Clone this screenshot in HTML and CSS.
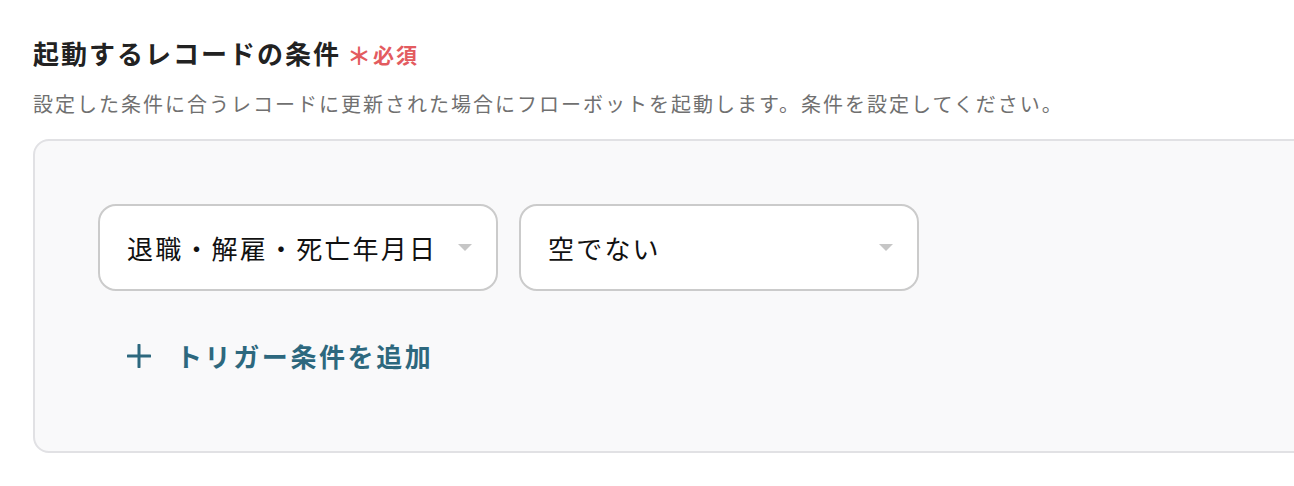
FILE: index.html
```html
<!DOCTYPE html>
<html lang="ja">
<head>
<meta charset="utf-8">
<link rel="stylesheet" href="styles.css">
</head>
<body>
<div class="page">
  <div class="title-row">
    <h2 class="title">起動するレコードの条件</h2>
    <span class="req"><span class="ast">＊</span>必須</span>
  </div>
  <p class="desc">設定した条件に合うレコードに更新された場合にフローボットを起動します。条件を設定してください。</p>
  <div class="panel">
    <div class="selects">
      <div class="select"><span class="val">退職・解雇・死亡年月日</span><span class="caret"></span></div>
      <div class="select"><span class="val">空でない</span><span class="caret"></span></div>
    </div>
    <div class="add">
      <svg class="plus" width="24" height="24" viewBox="0 0 24 24"><path d="M12 1v22M1 12h22" stroke="currentColor" stroke-width="3" stroke-linecap="round" fill="none"/></svg>
      <span class="add-text">トリガー条件を追加</span>
    </div>
  </div>
</div>
</body>
</html>
```
FILE: styles.css
```css
html, body {
  margin: 0;
  padding: 0;
  background: #ffffff;
  overflow: hidden;
}
body {
  font-family: "Noto Sans CJK JP", "Noto Sans", sans-serif;
}
.page {
  padding: 35px 0 0 33px;
}
.title-row {
  display: flex;
  align-items: center;
  height: 36px;
}
.title {
  margin: 0;
  font-size: 26px;
  line-height: 36px;
  font-weight: 700;
  color: #222222;
  letter-spacing: 2px;
}
.req {
  margin-left: 6px;
  color: #e35b5f;
  font-weight: 700;
  font-size: 21px;
  letter-spacing: 2px;
  display: flex;
  align-items: center;
  padding-top: 2px;
}
.ast {
  font-size: 24px;
  margin-right: 2px;
  letter-spacing: 0;
}
.desc {
  margin: 19px 0 0;
  font-size: 20px;
  line-height: 28px;
  color: #707070;
  letter-spacing: 0.1em;
}
.panel {
  margin-top: 21px;
  margin-right: -60px;
  background: #f9f9fa;
  border: 2px solid #e1e1e4;
  border-radius: 16px;
  padding: 63px 63px 77px;
}
.selects {
  display: flex;
  gap: 21px;
}
.select {
  width: 400px;
  height: 87px;
  box-sizing: border-box;
  background: #ffffff;
  border: 2px solid #cbcbcb;
  border-radius: 18px;
  display: flex;
  align-items: center;
  justify-content: space-between;
  padding: 0 24px 0 27px;
}
.val {
  font-size: 26px;
  letter-spacing: 2.2px;
  color: #111111;
  white-space: nowrap;
}
.caret {
  width: 0;
  height: 0;
  border-left: 7px solid transparent;
  border-right: 7px solid transparent;
  border-top: 7px solid #c6c6c6;
}
.add {
  margin-top: 47px;
  display: flex;
  align-items: center;
  height: 36px;
  color: #2d687e;
  padding-left: 29px;
}
.plus {
  display: block;
}
.add-text {
  margin-left: 25px;
  font-size: 26px;
  font-weight: 700;
  letter-spacing: 2.6px;
  line-height: 36px;
}
```
